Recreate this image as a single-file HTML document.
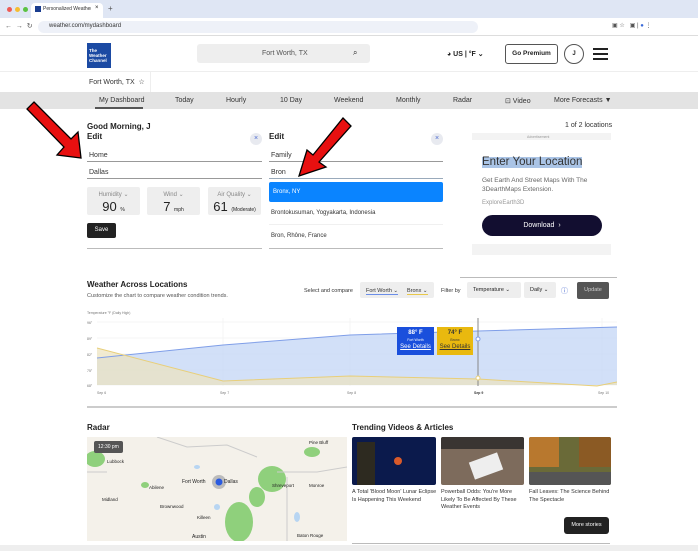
<!DOCTYPE html>
<html><head><meta charset="utf-8"><style>
*{box-sizing:border-box;margin:0;padding:0}
body{width:698px;height:551px;overflow:hidden;background:#fff;font-family:"Liberation Sans",sans-serif;color:#222;position:relative;font-size:7px}
.a{position:absolute}
.b{font-weight:bold}
.inp{position:absolute;border-bottom:1px solid #999;font-size:7px;color:#333;padding-left:2px}
.stat{position:absolute;top:187px;width:53px;height:28px;background:#eee;border-radius:2px;text-align:center;font-size:6px;color:#888;padding-top:4px}
.stat b{display:block;color:#222;font-size:13px;font-weight:normal;margin-top:1px}
.stat b small{font-size:5px}
.nav span{position:absolute;top:97px;font-size:7px;color:#333}
</style></head><body>
<!-- browser chrome -->
<div class="a" style="left:0;top:0;width:698px;height:18px;background:#dfe6f4"></div>
<div class="a" style="left:7px;top:7px;width:5px;height:5px;border-radius:50%;background:#ee5b55"></div>
<div class="a" style="left:15px;top:7px;width:5px;height:5px;border-radius:50%;background:#f5bd32"></div>
<div class="a" style="left:23px;top:7px;width:5px;height:5px;border-radius:50%;background:#5ac242"></div>
<div class="a" style="left:31px;top:3px;width:72px;height:15px;background:#fff;border-radius:4px 4px 0 0"></div>
<div class="a" style="left:35px;top:6px;width:6px;height:6px;background:#1a3d8f"></div>
<div class="a" style="left:43px;top:6px;font-size:5px;color:#333;width:48px;overflow:hidden;white-space:nowrap">Personalized Weather Alerts</div>
<div class="a" style="left:95px;top:5px;font-size:6px">×</div>
<div class="a" style="left:108px;top:4px;font-size:8px;color:#555">+</div>
<div class="a" style="left:0;top:18px;width:698px;height:18px;background:#fff;border-bottom:1px solid #ddd"></div>
<div class="a" style="left:5px;top:22px;font-size:7px;color:#555">←&nbsp; →&nbsp; ↻</div>
<div class="a" style="left:38px;top:21px;width:440px;height:12px;background:#eef1f8;border-radius:6px"></div>
<div class="a" style="left:49px;top:23px;font-size:6px;color:#333">weather.com/mydashboard</div>
<div class="a" style="left:612px;top:22px;font-size:6px;color:#555">▣ ☆ &nbsp; ▣ | <span style="color:#3a6ad8">●</span> ⋮</div>
<!-- header -->
<div class="a" style="left:87px;top:43px;width:24px;height:25px;background:#1b4aa3;color:#fff;font-size:4.5px;line-height:5px;padding:5px 2px;font-weight:bold">The<br>Weather<br>Channel</div>
<div class="a" style="left:197px;top:44px;width:173px;height:19px;background:#eee;border-radius:3px"></div>
<div class="a" style="left:262px;top:50px;font-size:7px;color:#555">Fort Worth, TX</div>
<div class="a" style="left:353px;top:48px;font-size:8px">⌕</div>
<div class="a b" style="left:447px;top:50px;font-size:7px">◕ US | °F ⌄</div>
<div class="a b" style="left:505px;top:44px;width:53px;height:20px;border:1px solid #555;border-radius:3px;font-size:6.5px;text-align:center;line-height:18px">Go Premium</div>
<div class="a b" style="left:564px;top:44px;width:20px;height:20px;border:1px solid #555;border-radius:50%;font-size:6px;text-align:center;line-height:18px">J</div>
<div class="a" style="left:593px;top:48px;width:15px;height:2px;background:#222;box-shadow:0 5px 0 #222,0 10px 0 #222"></div>
<div class="a" style="left:0;top:71px;width:698px;height:1px;background:#eee"></div>
<div class="a" style="left:89px;top:78px;font-size:7px;color:#333">Fort Worth, TX &nbsp;☆</div>
<div class="a" style="left:150px;top:72px;width:1px;height:20px;background:#eee"></div>
<div class="a nav" style="left:0;top:92px;width:698px;height:17px;background:#e3e3e3"></div>
<div class="nav"><span style="left:99px">My Dashboard</span><span style="left:175px">Today</span><span style="left:226px">Hourly</span><span style="left:280px">10 Day</span><span style="left:334px">Weekend</span><span style="left:396px">Monthly</span><span style="left:453px">Radar</span><span style="left:505px">⊡ Video</span><span style="left:554px">More Forecasts ▼</span></div>
<div class="a" style="left:95px;top:107px;width:48px;height:2px;background:#555"></div>
<!-- edit panels -->
<div class="a b" style="left:87px;top:122px;font-size:8px">Good Morning, J</div>
<div class="a b" style="left:87px;top:132px;font-size:8px">Edit</div>
<div class="a" style="left:250px;top:133px;width:12px;height:12px;border-radius:50%;background:#e8eaf0;color:#4a6ad0;font-size:7px;text-align:center;line-height:12px">×</div>
<div class="inp" style="left:87px;top:152px;width:175px;height:10px">Home</div>
<div class="inp" style="left:87px;top:169px;width:175px;height:10px">Dallas</div>
<div class="stat" style="left:87px">Humidity ⌄<b>90 <small>%</small></b></div>
<div class="stat" style="left:147px">Wind ⌄<b>7 <small>mph</small></b></div>
<div class="stat" style="left:208px">Air Quality ⌄<b>61 <small>(Moderate)</small></b></div>
<div class="a" style="left:87px;top:223px;width:29px;height:15px;background:#222;border-radius:2px;color:#fff;font-size:6px;text-align:center;line-height:15px">Save</div>
<div class="a" style="left:87px;top:248px;width:175px;height:1px;background:#bbb"></div>
<div class="a b" style="left:269px;top:132px;font-size:8px">Edit</div>
<div class="a" style="left:431px;top:133px;width:12px;height:12px;border-radius:50%;background:#e8eaf0;color:#4a6ad0;font-size:7px;text-align:center;line-height:12px">×</div>
<div class="inp" style="left:269px;top:152px;width:174px;height:10px">Family</div>
<div class="inp" style="left:269px;top:169px;width:174px;height:10px;border-color:#9ab">Bron</div>
<div class="a" style="left:269px;top:182px;width:174px;height:20px;background:#0a84ff;border-radius:2px;color:#fff;font-size:6px;padding:7px 4px">Bronx, NY</div>
<div class="a" style="left:271px;top:210px;font-size:6px;color:#333">Brontokusuman, Yogyakarta, Indonesia</div>
<div class="a" style="left:269px;top:224px;width:174px;height:1px;background:#f0f0f0"></div>
<div class="a" style="left:271px;top:233px;font-size:6px;color:#333">Bron, Rhône, France</div>
<div class="a" style="left:269px;top:248px;width:174px;height:1px;background:#bbb"></div>
<!-- ad -->
<div class="a" style="left:565px;top:122px;font-size:7px;color:#333">1 of 2 locations</div>
<div class="a" style="left:472px;top:133px;width:139px;height:122px;background:#f3f3f3"></div>
<div class="a" style="left:472px;top:140px;width:139px;height:104px;background:#fff"></div>
<div class="a" style="left:527px;top:135px;font-size:3.5px;color:#999">Advertisement</div>
<div class="a" style="left:482px;top:157px;font-size:11.5px;color:#333;background:#aac4e6;line-height:11px">Enter Your Location</div>
<div class="a" style="left:482px;top:176px;font-size:6.5px;color:#666;line-height:9px">Get Earth And Street Maps With The<br>3DearthMaps Extension.</div>
<div class="a" style="left:482px;top:200px;font-size:6px;color:#999">ExploreEarth3D</div>
<div class="a" style="left:482px;top:215px;width:120px;height:21px;background:#120e30;border-radius:11px;color:#fff;font-size:7px;text-align:center;line-height:21px">Download &nbsp;›</div>
<!-- chart section -->
<div class="a b" style="left:87px;top:280px;font-size:8px">Weather Across Locations</div>
<div class="a" style="left:87px;top:293px;font-size:5.5px;color:#555">Customize the chart to compare weather condition trends.</div>
<div class="a" style="left:304px;top:288px;font-size:5.5px;color:#333">Select and compare</div>
<div class="a" style="left:360px;top:282px;width:74px;height:16px;background:#eee;border-radius:2px"></div>
<div class="a" style="left:366px;top:288px;font-size:5.5px;color:#333;border-bottom:1px solid #6b8ee8">Fort Worth ⌄</div>
<div class="a" style="left:407px;top:288px;font-size:5.5px;color:#333;border-bottom:1px solid #e8c84a">Bronx ⌄</div>
<div class="a" style="left:441px;top:288px;font-size:5.5px;color:#333">Filter by</div>
<div class="a" style="left:467px;top:282px;width:54px;height:16px;background:#eee;border-radius:2px;font-size:5.5px;padding:5px 6px">Temperature ⌄</div>
<div class="a" style="left:524px;top:282px;width:32px;height:16px;background:#eee;border-radius:2px;font-size:5.5px;padding:5px 6px">Daily ⌄</div>
<div class="a" style="left:561px;top:286px;font-size:7px;color:#4a6ad0">ⓘ</div>
<div class="a" style="left:577px;top:282px;width:32px;height:17px;background:#555;border-radius:2px;color:#ccc;font-size:5.5px;text-align:center;line-height:17px">Update</div>
<div class="a" style="left:460px;top:277px;width:157px;height:1px;background:#bbb"></div>
<div class="a" style="left:87px;top:311px;font-size:3.5px;color:#777">Temperature °F (Daily High)</div>
<svg class="a" style="left:87px;top:318px" width="530" height="82">
<g stroke="#eee" stroke-width="0.6"><line x1="10" y1="4" x2="530" y2="4"/><line x1="10" y1="20" x2="530" y2="20"/><line x1="10" y1="36" x2="530" y2="36"/><line x1="10" y1="52" x2="530" y2="52"/><line x1="10" y1="67" x2="530" y2="67"/><line x1="136" y1="0" x2="136" y2="68"/><line x1="263" y1="0" x2="263" y2="68"/><line x1="515" y1="0" x2="515" y2="68"/></g>
<path d="M10 40 L136 27 L263 17 L391 13 L530 9 L530 67 L10 67Z" fill="#c7d8f6" opacity="0.8"/>
<path d="M10 30 L136 63 L263 58 L391 61 L510 68 L530 64 L530 67 L10 67Z" fill="#ede3bd" opacity="0.7"/>
<path d="M10 40 L136 27 L263 17 L391 13 L530 9" stroke="#7f9ee8" fill="none"/>
<path d="M10 30 L136 63 L263 58 L391 61 L510 68 L530 64" stroke="#e8cf7a" fill="none"/>
<line x1="391" y1="0" x2="391" y2="68" stroke="#888"/>
<circle cx="391" cy="21" r="2" fill="#fff" stroke="#7f9ee8"/><circle cx="391" cy="60" r="2" fill="#fff" stroke="#e8cf7a"/>
<g font-size="3.5" fill="#777"><text x="0" y="6">96°</text><text x="0" y="22">89°</text><text x="0" y="38">82°</text><text x="0" y="54">75°</text><text x="0" y="69">68°</text>
<text x="10" y="76">Sep 6</text><text x="133" y="76">Sep 7</text><text x="260" y="76">Sep 8</text><text x="387" y="76" font-weight="bold" fill="#333">Sep 9</text><text x="511" y="76">Sep 10</text></g>
</svg>
<div class="a" style="left:397px;top:327px;width:37px;height:28px;background:#1a4fdc;color:#fff;text-align:center;font-size:6px;padding-top:3px;line-height:7px"><b>88° F</b><br><span style="font-size:3.5px">Fort Worth</span><br><u>See Details</u></div>
<div class="a" style="left:437px;top:327px;width:36px;height:28px;background:#e9b90f;color:#333;text-align:center;font-size:6px;padding-top:3px;line-height:7px"><b>74° F</b><br><span style="font-size:3.5px">Bronx</span><br><u>See Details</u></div>
<div class="a" style="left:87px;top:406px;width:530px;height:2px;background:#ccc"></div>
<!-- radar -->
<div class="a b" style="left:87px;top:423px;font-size:8px">Radar</div>
<div class="a" style="left:87px;top:437px;width:260px;height:104px;background:#f4f1ea;overflow:hidden">
<svg width="260" height="104"><g fill="#8fd07c"><ellipse cx="8" cy="22" rx="10" ry="8"/><ellipse cx="185" cy="42" rx="14" ry="13"/><ellipse cx="152" cy="85" rx="14" ry="20"/><ellipse cx="170" cy="60" rx="8" ry="10"/><ellipse cx="225" cy="15" rx="8" ry="5"/><ellipse cx="58" cy="48" rx="4" ry="3"/></g><g fill="#b7d5f2"><ellipse cx="110" cy="30" rx="3" ry="2"/><ellipse cx="130" cy="70" rx="3" ry="3"/><ellipse cx="210" cy="80" rx="3" ry="5"/></g><path d="M0 35 L20 35 M70 0 L100 10 L140 8 L170 20 M190 35 L230 35 L260 30 M200 40 L200 104" stroke="#ccc" fill="none"/><circle cx="132" cy="45" r="7" fill="#bbb"/><circle cx="132" cy="45" r="3.5" fill="#2a5be0"/></svg>
<div class="a" style="left:7px;top:4px;background:#555;color:#fff;font-size:5px;padding:3px 4px;border-radius:2px">12:30 pm</div>
<div class="a" style="left:20px;top:22px;font-size:4.5px">Lubbock</div><div class="a" style="left:95px;top:42px;font-size:5px">Fort Worth</div><div class="a" style="left:137px;top:42px;font-size:5px">Dallas</div><div class="a" style="left:62px;top:48px;font-size:4.5px">Abilene</div><div class="a" style="left:15px;top:60px;font-size:4.5px">Midland</div><div class="a" style="left:73px;top:67px;font-size:4.5px">Brownwood</div><div class="a" style="left:110px;top:78px;font-size:4.5px">Killeen</div><div class="a" style="left:105px;top:97px;font-size:5px">Austin</div><div class="a" style="left:185px;top:46px;font-size:4.5px">Shreveport</div><div class="a" style="left:222px;top:46px;font-size:4.5px">Monroe</div><div class="a" style="left:210px;top:96px;font-size:4.5px">Baton Rouge</div><div class="a" style="left:222px;top:3px;font-size:4.5px">Pine Bluff</div>
</div>
<!-- trending -->
<div class="a b" style="left:352px;top:423px;font-size:8px">Trending Videos &amp; Articles</div>
<div class="a" style="left:352px;top:437px;width:84px;height:48px;background:#0b1a4c;border-radius:2px;overflow:hidden"><div class="a" style="left:42px;top:20px;width:8px;height:8px;border-radius:50%;background:#d95a2a"></div><div class="a" style="left:5px;top:5px;width:18px;height:43px;background:#2d2a20"></div></div>
<div class="a" style="left:441px;top:437px;width:83px;height:48px;background:#7d6b5c;border-radius:2px;overflow:hidden"><div class="a" style="left:30px;top:20px;width:30px;height:18px;background:#eee;transform:rotate(-20deg)"></div><div class="a" style="left:0;top:0;width:83px;height:12px;background:#3a3532"></div></div>
<div class="a" style="left:529px;top:437px;width:82px;height:48px;background:#6a6a38;border-radius:2px;overflow:hidden"><div class="a" style="left:0;top:0;width:30px;height:30px;background:#b8782e"></div><div class="a" style="left:50px;top:0;width:32px;height:30px;background:#8b5a24"></div><div class="a" style="left:0;top:35px;width:82px;height:13px;background:#555"></div></div>
<div class="a" style="left:352px;top:489px;font-size:5.5px;color:#333;line-height:7.5px;width:85px">A Total 'Blood Moon' Lunar Eclipse Is Happening This Weekend</div>
<div class="a" style="left:441px;top:489px;font-size:5.5px;color:#333;line-height:7.5px;width:85px">Powerball Odds: You're More Likely To Be Affected By These Weather Events</div>
<div class="a" style="left:529px;top:489px;font-size:5.5px;color:#333;line-height:7.5px;width:85px">Fall Leaves: The Science Behind The Spectacle</div>
<div class="a" style="left:564px;top:517px;width:45px;height:17px;background:#222;border-radius:3px;color:#fff;font-size:5.5px;text-align:center;line-height:17px">More stories</div>
<div class="a" style="left:352px;top:543px;width:258px;height:1px;background:#bbb"></div>
<div class="a" style="left:0;top:545px;width:698px;height:6px;background:#eee"></div>
<!-- red arrows -->
<svg class="a" style="left:0;top:0" width="698" height="551">
<g fill="#e81010" stroke="#000" stroke-width="1.3" stroke-linejoin="miter">
<polygon points="34,102 71,139 78,132 81,158 57,155 64,147 27,109"/>
<polygon points="343,118 351,126 319,162 326,167 299,176 307,150 313,155"/>
</g></svg>
</body></html>
